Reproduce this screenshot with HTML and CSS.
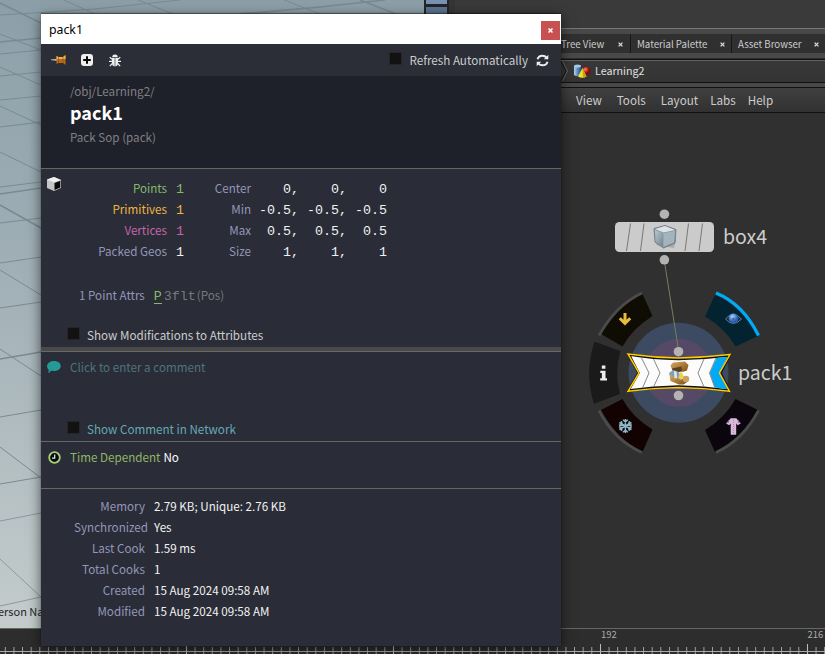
FILE: index.html
```html
<!DOCTYPE html>
<html lang="en">
<head>
<meta charset="utf-8">
<title>pack1</title>
<link rel="stylesheet" href="styles.css">
</head>
<body>
<div class="app">
  <main class="workspace">
    <section class="viewport">
      <svg class="floor" viewBox="0 0 424 628" fill="none">
        <g stroke="#788b94" stroke-width="1">
          <path d="M0 15 50 12 95 9 180 0M0 54 41 50M0 76 41 72M0 100 41 96M0 127 41 122M0 187 41 182M0 223 41 218M0 263 41 257M0 308 41 302M0 417 41 410M0 34 41 50M0 67 41 85M0 106 41 125M0 152 41 172M0 270 41 295M0 349 41 376M0 447 41 478M0 484 41 477M64 0 95 14M138 0 173 14M284 0 320 14"/>
        </g>
        <g stroke="#788b94" stroke-width="1.7"><path d="M0 3 41 23M0 42 41 38M0 194 41 188M0 205 41 228M0 359 41 352M240 14 320 7 385 0M360 0 396 14"/></g>
        <path d="M0 521 41 513M0 559 41 597M0 606 41 597" stroke="#8c999d"/>
      </svg>
      <span class="camera">erson Na</span>
    </section>
    <div class="shelf"><i></i><i></i></div>
    <section class="network">
      <div class="pane-space"></div>
      <nav class="tabs">
        <div class="tab first"><span>Tree View</span><svg viewBox="0 0 5 5"><path d="M.6.6 4.4 4.4M4.4.6.6 4.4"/></svg></div>
        <div class="tab second"><span>Material Palette</span><svg viewBox="0 0 5 5"><path d="M.6.6 4.4 4.4M4.4.6.6 4.4"/></svg></div>
        <div class="tab third"><span>Asset Browser</span><svg viewBox="0 0 5 5"><path d="M.6.6 4.4 4.4M4.4.6.6 4.4"/></svg></div>
      </nav>
      <div class="path">
        <svg class="chevron" viewBox="0 0 8 22"><path d="M0 1 5 11 0 21" stroke="#151515" fill="none"/><path d="M1.5 1 6.5 11 1.5 21" stroke="#666" fill="none"/></svg>
        <svg class="shapes" viewBox="0 0 18 16">
          <defs>
            <linearGradient id="cyl"><stop stop-color="#bad5ed"/><stop offset=".5" stop-color="#5b8dc4"/><stop offset="1" stop-color="#275285"/></linearGradient>
            <radialGradient id="ball" cx=".35" cy=".3"><stop stop-color="#ff8b70"/><stop offset=".6" stop-color="#cc251c"/><stop offset="1" stop-color="#7d0d0a"/></radialGradient>
          </defs>
          <path d="M1 3v9q3.500 2.500 7 0V3" fill="url(#cyl)"/><ellipse cx="4.500" cy="3" rx="3.500" ry="1.600" fill="#a9c9e6"/>
          <circle cx="13.500" cy="8" r="4" fill="url(#ball)"/><path d="M9.500 5 5 13.500q4 2.500 8.500 0z" fill="#f2df2c"/><path d="M9.500 5 10 14.700q2-.1 3.500-1.200z" fill="#b9a51a"/>
        </svg>
        <span>Learning2</span>
      </div>
      <nav class="menu"><span>View</span><span>Tools</span><span>Layout</span><span>Labs</span><span>Help</span></nav>
      <svg class="graph" viewBox="455 113 370 515" width="370" height="515">
        <defs>
          <linearGradient id="cubeL" x2="1" y2="1"><stop stop-color="#b9c6ce"/><stop offset="1" stop-color="#74858f"/></linearGradient>
          <radialGradient id="iris" cx=".4" cy=".3"><stop stop-color="#a9d3ff"/><stop offset="1" stop-color="#2b5fae"/></radialGradient>
          <linearGradient id="gold" x2="1" y2="1"><stop stop-color="#dcae61"/><stop offset="1" stop-color="#7c4b12"/></linearGradient>
        </defs>
        <circle cx="678.500" cy="372.800" r="50" fill="#3c4a62"/>
        <circle cx="678.500" cy="372.800" r="34" fill="#564965"/>
        <path d="M664.500 262 678.500 350" stroke="#70815c"/>
        <!-- node box4 -->
        <rect x="615" y="222" width="99" height="30" rx="4.500" fill="#cbcbcb"/>
        <path d="M630.500 223.500 626.500 251M644 223.500 640.500 251M688.500 223.500 685 251M702.500 223.500 699 251" stroke="#787878"/>
        <path d="M656 245 674 248 676 240 668 232z" fill="#aaa"/>
        <path d="M654 228.500 665 225.500 676 229.500 675 243 663.500 248 655 242z" fill="#8b979f" stroke="#667078" stroke-width=".8"/>
        <path d="M655 229 665 226 675 230 663.500 232.500z" fill="#dce4e8"/><path d="M655 230 663 233V246.500L655.500 241.500z" fill="url(#cubeL)"/><path d="M663.500 233.300 675 230.700 674 242.500 663.500 246.700z" fill="#a3b4be"/>
        <g fill="#b3b3b3"><circle cx="664.400" cy="214.200" r="4.800"/><circle cx="664.400" cy="259.800" r="4.800"/></g>
        <!-- ring buttons -->
        <path d="M601 334 622.500 346.500Q632 329 652.500 316L642.500 294Q618 304 601 334z" fill="#0f0c03"/>
        <path d="M599 335.500Q616 305 642 293" stroke="#4b4b4b" stroke-width="2.800" fill="none"/>
        <path d="M715 295 705 316.500Q725 328 735.500 346.500L758 336Q743 307 715 295z" fill="#032331"/>
        <path d="M716 293Q743 304 758.500 335.500" stroke="#00aaf4" stroke-width="3.200" fill="none"/>
        <path d="M594.500 341.800 620.500 351Q614 373 620 394L594 403.800Q584 373 594.500 341.800z" fill="#1a1a1a"/>
        <path d="M601 410 622.500 399Q632 417 652.500 429.500L642.500 452Q618 441 601 410z" fill="#120202"/>
        <path d="M599 410.500Q614 440 642 452.500" stroke="#4b4b4b" stroke-width="2.800" fill="none"/>
        <path d="M715 452 705 430Q725 418 735.500 399L758 410Q743 440 715 452z" fill="#0b050e"/>
        <path d="M716 452.500Q743 440 758.500 410.500" stroke="#4b4b4b" stroke-width="2.800" fill="none"/>
        <path d="M625 313v10M619.800 318.200 625 323.400 630.200 318.200" stroke="#e9bd3b" stroke-width="3" fill="none"/>
        <path d="M725.500 319Q733 309.500 741.500 319Q733 328 725.500 319z" fill="#152738" stroke="#5a7d9d"/><circle cx="733.500" cy="318.500" r="4.900" fill="url(#iris)"/><circle cx="733.500" cy="319" r="1.300" fill="#3b68ab"/>
        <path d="M601.800 365.500h3.600v3.200h-3.600zM600.300 370.700h5.200v7.500h1.500v2.300h-6.800v-2.300h1.700v-5.200h-1.600z" fill="#eee"/>
        <g stroke="#90b9c7" stroke-width="1.500" fill="none"><path d="M625.400 419v14M619.300 422.500 631.500 429.500M619.300 429.500 631.500 422.500M623 419.800l2.400 2.200 2.400-2.200M623 432.200l2.400-2.200 2.400 2.200M619 425.200l3.200-.9-.9-3.200M631.800 425.200l-3.200-.9.9-3.200M619 426.800l3.200.9-.9 3.200M631.800 426.800l-3.200.9.9 3.200"/></g>
        <path d="M730.700 418.200h5.600l4.400 5.300-3 1.800-1.500-1.700v11.200h-5.500v-11.200l-1.600 1.700-3-1.800z" fill="#d7b9dc"/><path d="M729.200 419.500l-3 4 3-1zM737.800 419.500l3 4-3-1z" fill="#986ca2"/><path d="M733.500 420v14" stroke="#b08ab7" stroke-dasharray="1 1"/>
        <!-- node pack1 -->
        <path d="M629 354.500Q653 358.500 678.500 359 704 358.500 729.500 355.500L720.500 373 729 390.500Q704 387 678.500 386.500 653 387 628.500 390.500L638.500 373z" fill="#fcfcfc" stroke="#111" stroke-width="2.400"/>
        <path d="M716.500 358 727.500 356.800 719 373 727.500 389.200 714.500 387.500 709.800 373z" fill="#00aaf4"/>
        <path d="M628 354 Q653 357.500 678.500 358 Q704 357.500 730 354.500 L719.500 373 729.500 391.300Q704 388 678.500 387.600Q653 388 628 391.300L639 373z" fill="none" stroke="#fc0" stroke-width="1.500"/>
        <path d="M641.500 358 649 373 642.500 388M653.500 359 660 373 653.500 387M704 359 698 373 704 387M716 358 709.500 373 715 388" stroke="#888" fill="none"/>
        <!-- treasure chest -->
        <path d="M670.500 365.500 673 362.500 685 361.500 688.500 365 687 370.500 682.500 372 681.500 367.500 672 369.500z" fill="url(#gold)"/><path d="M672 368.500 681.500 366.500 682.500 371.500 673 373z" fill="#5c4020"/>
        <path d="M669 373 673 370 679 372 681 379 671 380z" fill="#7da0bb"/><path d="M669.500 374.500 680.500 379.500 687.500 377.500 688 381.500 683.500 384.500 679 384.500 670.500 381z" fill="url(#gold)"/><path d="M681 371 685 378.500 678 378.500z" fill="#f0d53b"/><circle cx="686" cy="379" r="3.200" fill="#caa165"/><path d="M674 371 676.500 371.500 677 378 674.500 378.500z" fill="#dfe8ed"/>
        <g fill="#b3b3b3"><circle cx="678.500" cy="351.700" r="4.800"/><circle cx="678.500" cy="395.500" r="4.800"/></g>
        <g class="node-name"><text x="723" y="243.500">box4</text><text x="738" y="379.500">pack1</text></g>
      </svg>
    </section>
  </main>
  <footer class="timeline">
    <svg viewBox="0 628 825 26" width="825" height="26">
      <defs><pattern id="ticks" x="4.800" y="0" width="8.625" height="700" patternUnits="userSpaceOnUse"><rect width="1" height="700" fill="#a0a0a0"/></pattern></defs>
      <rect y="647" width="825" height="7" fill="url(#ticks)"/>
      <path d="M186.500 645v9M393.500 645v9M600.500 644v10M807.500 644v10" stroke="#bcbcbc"/>
      <path d="M0 651.500H825" stroke="#aaa"/>
      <text x="601" y="638.300">192</text><text x="807.500" y="638.300">216</text>
    </svg>
  </footer>
</div>

<section class="window">
  <header class="titlebar"><span>pack1</span><b class="close"><svg viewBox="0 0 5 5"><path d="M.5.5 4.500 4.500M4.500.5.5 4.500"/></svg></b></header>
  <div class="toolbar">
    <svg class="pin" viewBox="0 0 16 12"><path d="M0 5.800 7 5v1.800z" fill="#ddd" stroke="#bbb" stroke-width=".5"/><path d="M5.500 2 7.500 3 12 3 14.500 1V11L12 9H7.500L5.500 10z" fill="#b96b19"/><path d="M5.500 2 7.500 3H12L14.500 1v4H5.500z" fill="#efb346"/><path d="M7.500 3v6M12 3v6" stroke="#814107" stroke-width=".5"/></svg>
    <svg class="plus" viewBox="0 0 12 12"><rect width="12" height="12" rx="3" fill="#eee"/><path d="M6 2.200v7.600M2.200 6h7.600" stroke="#080808" stroke-width="2"/></svg>
    <svg class="bug" viewBox="0 0 12 13"><path d="M3.200 3.200a2.800 2.800 0 0 1 5.600 0zM3 4h2.700v8.500Q3 12 3 9zM6.300 4H9v5q0 3-2.700 3.500z" fill="#eee"/><path d="M.7 3.200 3.200 5.300M11.300 3.200 8.800 5.300M0 7.300h3M12 7.300H9M3.300 9.500.8 12.200M8.700 9.500l2.500 2.700" stroke="#eee" stroke-width="1.200" fill="none"/></svg>
    <i class="check"></i><span>Refresh Automatically</span>
    <svg class="refresh" viewBox="0 0 13 13"><path d="M1.500 5.300Q2.500 1.700 6.500 1.700 9 1.700 10.700 3.700M11.500 7.700Q10.500 11.300 6.500 11.300 4 11.300 2.300 9.300" fill="none" stroke="#eee" stroke-width="1.900"/><path d="M12.300.8v4.500H7.800zM.7 12.200V7.700h4.500z" fill="#eee"/></svg>
  </div>
  <div class="heading"><p>/obj/Learning2/</p><h1>pack1</h1><p>Pack Sop (pack)</p></div>
  <div class="geometry">
    <svg class="cube" viewBox="0 0 14 14"><path d="M0 2.500 7 0 14 3v8L7 14 0 11z" fill="#c5c5c5"/><path d="M0 2.500 7 0 14 3 7 5.300z" fill="#f0f0f0"/><path d="M7.500 6 13.300 3.800V10.400L7.500 13z" fill="#090909"/></svg>
    <div class="stats">
      <span class="green">Points</span><code class="green">1</code><span>Center</span><code>   0,    0,    0</code>
      <span class="yellow">Primitives</span><code class="yellow">1</code><span>Min</span><code>-0.5, -0.5, -0.5</code>
      <span class="pink">Vertices</span><code class="pink">1</code><span>Max</span><code> 0.5,  0.5,  0.5</code>
      <span>Packed Geos</span><code>1</code><span>Size</span><code>   1,    1,    1</code>
    </div>
    <div class="attrs"><span>1 Point Attrs</span><code class="attr">P</code><code class="type">3flt</code><em>(Pos)</em></div>
    <div class="option"><i class="check"></i><span>Show Modifications to Attributes</span></div>
  </div>
  <div class="comment">
    <div class="prompt"><svg class="bubble" viewBox="0 0 14 12"><path d="M7 0c9 0 9 10 0 10L4 9.700Q3 11.500.8 12 2 10.500 1.600 8.700C-1.700 5.800.3 0 7 0z" fill="#259a96"/></svg><span>Click to enter a comment</span></div>
    <div class="option"><i class="check"></i><span>Show Comment in Network</span></div>
  </div>
  <div class="time"><svg viewBox="0 0 13 13"><circle cx="6.500" cy="6.500" r="5.300" fill="#07080a" stroke="#a8cf78" stroke-width="1.800"/><path d="M6.700 3.500v3.700H4" stroke="#eee" stroke-width="1.200" fill="none"/></svg><span>Time Dependent</span><b>No</b></div>
  <dl class="info">
    <dt>Memory</dt><dd>2.79 KB; Unique: 2.76 KB</dd>
    <dt class="wide">Synchronized</dt><dd>Yes</dd>
    <dt>Last Cook</dt><dd>1.59 ms</dd>
    <dt>Total Cooks</dt><dd>1</dd>
    <dt>Created</dt><dd>15 Aug 2024 09:58 AM</dd>
    <dt>Modified</dt><dd>15 Aug 2024 09:58 AM</dd>
  </dl>
</section>
</body>
</html>
```
FILE: styles.css
```css
* { box-sizing: border-box; }
body { margin: 0; width: 825px; height: 654px; overflow: hidden; font: 11.65px/21px "Noto Sans CJK SC", "Noto Sans", sans-serif; color: #ccc; background: #303030; }
p, h1, dl, dd { margin: 0; }
svg { display: block; flex: none; }
span { white-space: nowrap; }
.app { display: grid; grid-template-rows: 628px 26px; height: 654px; }
.workspace { display: grid; grid-template-columns: 424px 31px 370px; }
.viewport { display: flex; align-items: flex-end; background: linear-gradient(#8c9fa8, #a0afb6 42%, #c4cccc); overflow: hidden; }
.floor { width: 424px; height: 628px; margin-right: -424px; }
.camera { font-size: 11px; color: #242829; margin: 0 0 6px -2px; }
.shelf { background: #252525; border-right: 6px solid #353535; display: flex; flex-direction: column; gap: 3px; padding-left: 2px; }
.shelf i { width: 21px; height: 4px; background: #7892b4; }
.shelf i + i { height: 9px; background: linear-gradient(#5a7592 65%, #777 65%); }
.network { display: flex; flex-direction: column; }
.pane-space { height: 34px; background: linear-gradient(#3a3a3a 28px, #777 28px, #777 29px, #484848 29px); }
.tabs { height: 26px; display: flex; padding-left: 98px; background: linear-gradient(#303030 19px, #494949 19px, #494949 24px, #111 25px); line-height: 19px; font-size: 9.700px; }
.tab { display: flex; align-items: center; height: 19px; padding: 2px 0 0 8px; border-left: 1px solid #171717; }
.tab svg { width: 5px; height: 5px; margin-left: auto; stroke: #ddd; stroke-width: 1.300; }
.first { width: 77px; padding-left: 7px; padding-right: 7px; }
.second { width: 101px; padding-left: 6px; padding-right: 6px; }
.third { width: 93px; padding-left: 6px; padding-right: 5px; }
.path { height: 23px; display: flex; align-items: center; padding-left: 106px; background: linear-gradient(#606060 1px, #383838 1px, #343434); border-bottom: 1px solid #111; font-size: 10.700px; color: #e0e0e0; }
.path span { margin-top: -2px; }
.chevron { width: 8px; height: 22px; }
.shapes { width: 18px; height: 16px; margin: 0 4px; }
.menu { height: 30px; border-top: 4px solid #484848; display: flex; align-items: center; gap: 15px; padding-left: 121px; background: linear-gradient(#111 1px, #404040 1px, #313131); border-bottom: 1px solid #111; }
.menu span:nth-child(4), .menu span:nth-child(5) { margin-left: -3px; }
.graph { background: #303030; }
.node-name { font-size: 19.500px; fill: #ccc; }
.timeline { background: #2d2d2d; border-top: 1px solid #646764; }
.timeline svg { margin-top: -1px; }
.timeline text { font: 9.500px "Noto Sans CJK SC", sans-serif; fill: #aaa; }

.window { position: absolute; left: 41px; top: 14px; width: 520px; height: 632px; display: flex; flex-direction: column; background: #2a2c37; box-shadow: 0 -1px 1px #0006, 0 3px 12px #0009; color: #9496b9; }
.titlebar { height: 30px; display: flex; align-items: center; justify-content: space-between; padding: 0 1px 0 8px; background: #fff; color: #000; font: 12.300px "Noto Sans", sans-serif; }
.close { width: 19px; height: 19px; display: grid; place-items: center; background: #c75050; }
.close svg { width: 5px; height: 5px; stroke: #fff; stroke-width: 1.500; }
.titlebar .close { margin-top: 3px; }
.toolbar { height: 32px; display: flex; align-items: center; padding: 0 12px 0 10px; background: #2b2d37; color: #ccc; }
.toolbar span { margin-top: -1px; }
.pin { width: 16px; height: 12px; margin-right: 14px; }
.plus { width: 12px; height: 12px; margin-right: 16px; }
.bug { width: 12px; height: 13px; margin-right: auto; }
.check { display: block; width: 13px; height: 13px; background: #121212; border: 1px solid #262626; flex: none; }
.toolbar .check { margin: -3px 7px 0 0; }
.refresh { width: 13px; height: 13px; margin-left: 8px; }
.heading { height: 92px; padding: 4px 29px; background: #1f212a; color: #7f7f84; }
.heading h1 { font-size: 18px; line-height: 22px; color: #fff; font-weight: 700; }
.heading p + h1 + p { margin-top: 3px; }
.geometry { height: 179px; border-top: 1px solid #666763; padding-top: 8px; display: flex; flex-direction: column; }
.cube { width: 14px; height: 14px; margin: 0 0 -14px 6px; }
.stats { display: grid; grid-template-columns: 126px 17px 67px 136px; grid-auto-rows: 21px; text-align: right; }
code { font: 13.333px/25px "Liberation Mono", monospace; height: 21px; white-space: pre; color: #f0f0f0; }
.stats .green { color: #86b96b; }
.stats .yellow { color: #edb544; }
.stats .pink { color: #c764ac; }
.attrs { display: flex; margin-top: 23px; padding-left: 38px; }
.attrs .attr { height: 20px; margin: 0 2px 0 9px; border-bottom: 1px solid #86b96b; color: #86b96b; }
.attrs .type, .attrs em { color: #77787e; font-style: normal; }
.attrs em { margin-left: 1px; }
.option { display: flex; align-items: center; padding-left: 26px; gap: 7px; color: #ccc; }
.geometry .option { margin-top: 19px; }
.option .check { margin-top: -2px; }
.comment { height: 94px; padding-top: 5px; border-top: 4px solid #494949; background: linear-gradient(#686868 1px, transparent 1px); color: #4f737e; }
.prompt { display: flex; align-items: center; padding-left: 6px; gap: 9px; }
.bubble { width: 14px; height: 12px; }
.comment .option { margin-top: 41px; color: #64aab5; }
.time { height: 47px; display: flex; align-items: flex-start; padding: 4px 0 0 7px; border-top: 1px solid #666763; color: #8fb765; }
.time svg { width: 13px; height: 13px; margin: 5px 9px 0 0; }
.time b { color: #fff; font-weight: 400; margin-left: 3px; }
.info { border-top: 1px solid #666763; padding-top: 6px; display: grid; grid-template-columns: 104px auto; column-gap: 9px; grid-auto-rows: 21px; text-align: right; }
.info dd { text-align: left; color: #f2f2f2; }
.info .wide { margin-right: -3px; }
```
